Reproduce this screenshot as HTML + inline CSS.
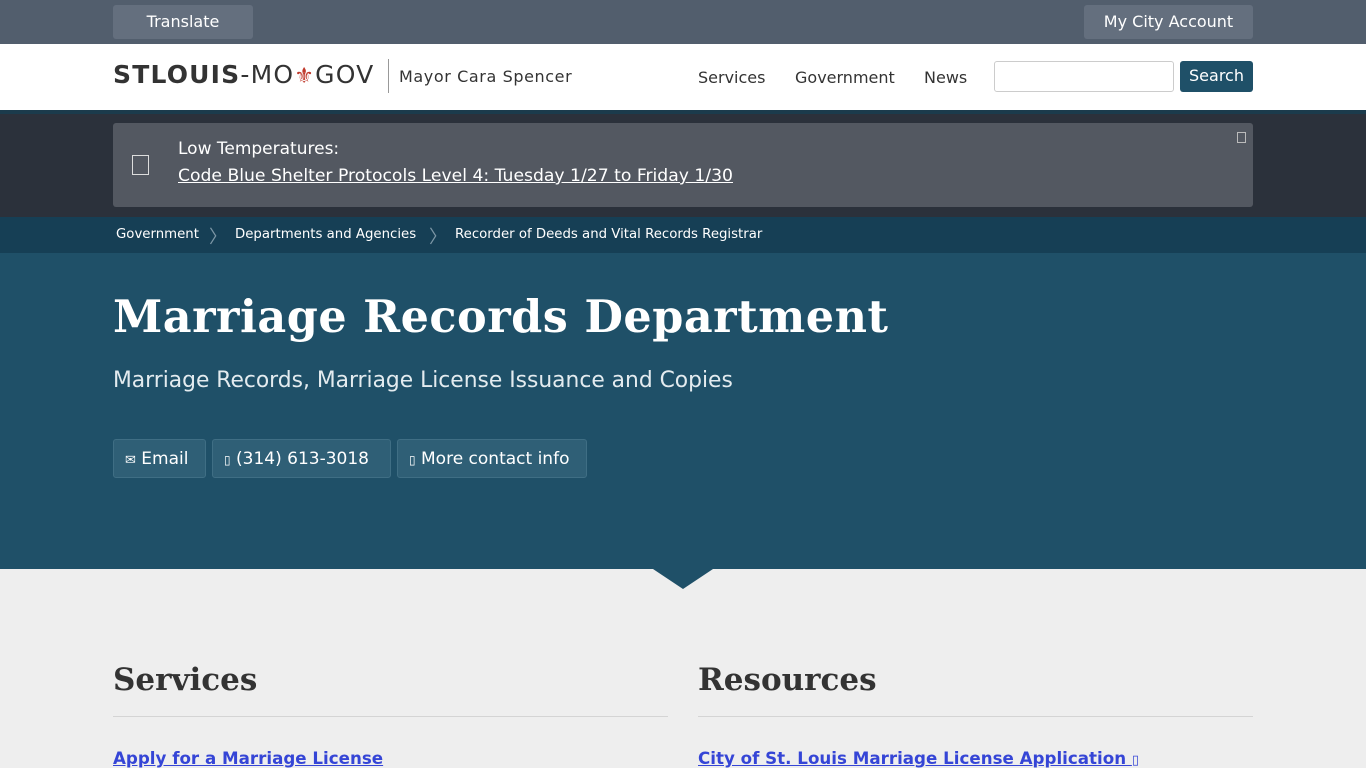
<!DOCTYPE html>
<html><head><meta charset="utf-8"><style>
*{margin:0;padding:0;box-sizing:border-box}
body{width:1366px;height:768px;overflow:hidden;background:#eeeeee;font-family:"DejaVu Sans","Liberation Sans",sans-serif;}
.top{height:44px;background:#525e6d;position:relative}
.tbtn{position:absolute;top:5px;height:34px;background:#646f7e;border-radius:3px;color:#fff;font-size:16px;line-height:34px;text-align:center}
.hdr{height:66px;background:#fff;position:relative;border-bottom:0}
.logo{position:absolute;left:113px;top:60px;font-size:25px;color:#333;letter-spacing:1.2px}
.nav a{position:absolute;top:68px;font-size:16px;color:#333;text-decoration:none}
.alertwrap{position:absolute;top:110px;left:0;width:1366px;height:107px;background:#2b313b;border-top:4px solid #1b3b4c}
.alert{position:absolute;left:113px;top:9px;width:1140px;height:84px;background:#535861;border-radius:3px;color:#fff}
.bc{position:absolute;top:217px;left:0;width:1366px;height:36px;background:#163f55;color:#fff;font-size:13.3px}
.hero{position:absolute;top:253px;left:0;width:1366px;height:316px;background:#1f5068;color:#fff}
.btn{position:absolute;top:186px;height:39px;background:#2f5f76;border:1px solid #3f6e84;border-radius:3px;font-size:17px;line-height:39px;padding:0 11px;color:#fff}
h2{position:absolute;font-family:"DejaVu Serif","Liberation Serif",serif;font-weight:bold;font-size:31px;color:#333}
.rule{position:absolute;top:716px;height:1px;background:#d4d4d4}
.lnk{position:absolute;top:748px;font-size:16.7px;font-weight:bold;color:#3545d6;text-decoration:underline}
</style></head><body>
<div class="top">
<div class="tbtn" style="left:113px;width:140px">Translate</div>
<div class="tbtn" style="left:1084px;width:169px">My City Account</div>
</div>
<div class="hdr"></div>
<div class="logo"><b style="font-weight:bold">STLOUIS</b>-MO<span style="color:#c0392b;font-size:22px">⚜</span>GOV</div>
<div style="position:absolute;left:388px;top:59px;width:1px;height:34px;background:#999"></div>
<div style="position:absolute;left:399px;top:67px;font-size:16px;color:#333;letter-spacing:.6px">Mayor Cara Spencer</div>
<div class="nav"><a style="left:698px">Services</a><a style="left:795px">Government</a><a style="left:924px">News</a></div>
<div style="position:absolute;left:994px;top:61px;width:180px;height:31px;border:1px solid #ccc;border-radius:3px;background:#fff"></div>
<div style="position:absolute;left:1180px;top:61px;width:73px;height:31px;background:#1f5068;border-radius:3px;color:#fff;font-size:16px;line-height:30px;text-align:center">Search</div>
<div class="alertwrap"><div class="alert">
<div style="position:absolute;left:19px;top:32px;width:17px;height:20px;border:1.5px solid #ddd"></div>
<div style="position:absolute;left:1124px;top:9px;width:9px;height:11px;border:1px solid #bbb"></div>
<div style="position:absolute;left:65px;top:16px;font-size:17px">Low Temperatures:</div>
<div style="position:absolute;left:65px;top:43px;font-size:17.2px;text-decoration:underline">Code Blue Shelter Protocols Level 4: Tuesday 1/27 to Friday 1/30</div>
</div></div>
<div class="bc">
<span style="position:absolute;left:116px;top:10px">Government</span>
<span style="position:absolute;left:209px;top:6px;color:#7d97a6;font-size:18px">〉</span>
<span style="position:absolute;left:235px;top:10px">Departments and Agencies</span>
<span style="position:absolute;left:429px;top:6px;color:#7d97a6;font-size:18px">〉</span>
<span style="position:absolute;left:455px;top:10px">Recorder of Deeds and Vital Records Registrar</span>
</div>
<div class="hero">
<div style="position:absolute;left:113px;top:38px;font-family:'DejaVu Serif','Liberation Serif',serif;font-weight:bold;font-size:44.5px;letter-spacing:0.5px">Marriage Records Department</div>
<div style="position:absolute;left:113px;top:115px;font-size:21.8px;color:#e3ebef">Marriage Records, Marriage License Issuance and Copies</div>
<div class="btn" style="left:113px;width:93px"><span style="font-size:13px">✉</span> Email</div>
<div class="btn" style="left:212px;width:179px"><span style="font-size:12px">▯</span> (314) 613-3018</div>
<div class="btn" style="left:397px;width:190px"><span style="font-size:12px">▯</span> More contact info</div>
</div>
<div style="position:absolute;left:653px;top:569px;width:0;height:0;border-left:30px solid transparent;border-right:30px solid transparent;border-top:20px solid #1f5068"></div>
<h2 style="left:113px;top:662px">Services</h2>
<h2 style="left:698px;top:662px">Resources</h2>
<div class="rule" style="left:113px;width:555px"></div>
<div class="rule" style="left:698px;width:555px"></div>
<div class="lnk" style="left:113px">Apply for a Marriage License</div>
<div class="lnk" style="left:698px">City of St. Louis Marriage License Application <span style="font-size:13px;text-decoration:none">▯</span></div>
</body></html>
